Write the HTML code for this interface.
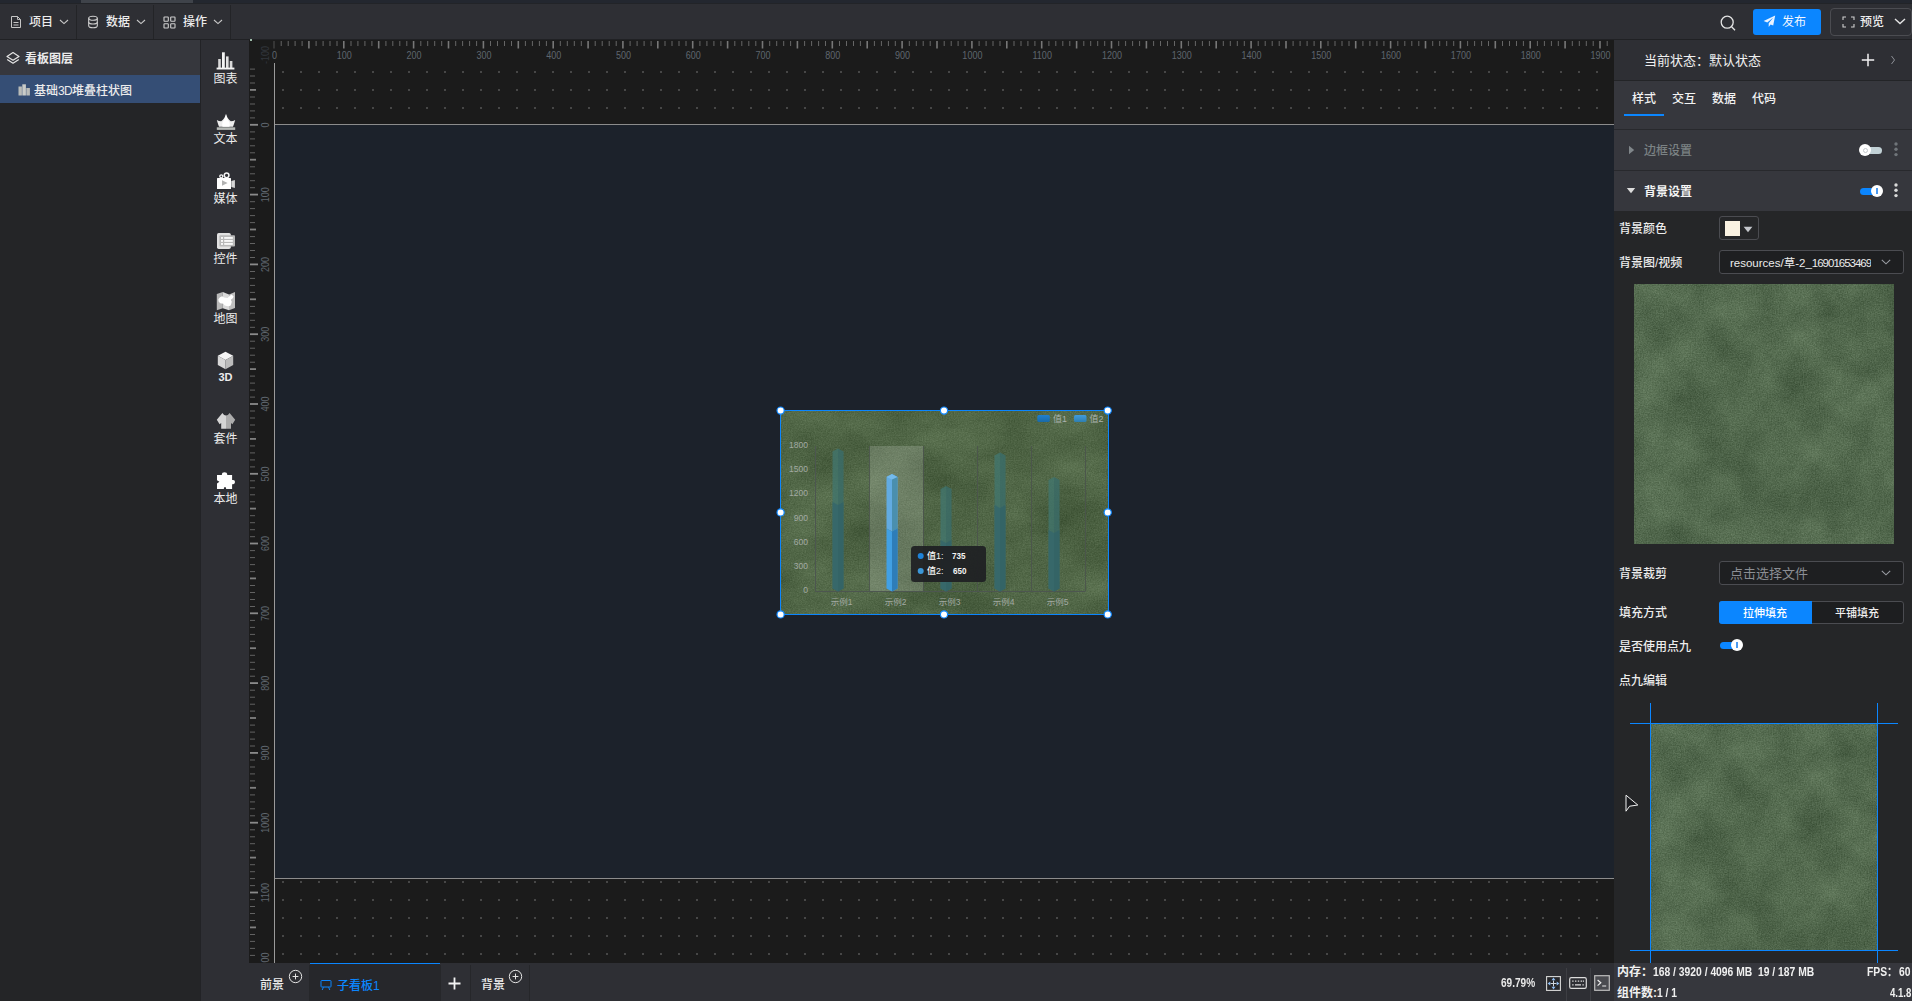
<!DOCTYPE html>
<html lang="zh-CN">
<head>
<meta charset="utf-8">
<title>看板编辑器</title>
<style>
*{box-sizing:border-box;margin:0;padding:0}
html,body{width:1912px;height:1001px;overflow:hidden;background:#242527}
body{position:relative;font-family:"Liberation Sans","Noto Sans CJK SC",sans-serif;font-size:12px;color:#ececec;line-height:1}
.abs{position:absolute}
.t{position:absolute;white-space:nowrap;line-height:16px;height:16px;margin-top:1px}
.b{font-weight:500}
svg{position:absolute;overflow:visible}
.num{font-family:"Liberation Sans",sans-serif;display:inline-block;transform-origin:0 50%}
/* top strip */
#strip{left:0;top:0;width:1912px;height:3px;background:#23272f}
#strip i{position:absolute;left:81px;top:0;width:112px;height:3px;background:#3f434a}
/* toolbar */
#bar{left:0;top:3px;width:1912px;height:37px;background:#2e2f34;border-bottom:1px solid #202124;border-top:1px solid #222428}
.sep{position:absolute;top:5px;width:1px;height:34px;background:#232427}
/* left */
#lhead{left:0;top:40px;width:200px;height:35px;background:#36373d}
#lsel{left:0;top:75px;width:200px;height:28px;background:#354e75}
#lrest{left:0;top:103px;width:200px;height:898px;background:#242527}
#lborder{left:200px;top:40px;width:1px;height:961px;background:#222326}
#icol{left:201px;top:40px;width:48px;height:961px;background:#2e2f34}
.ic{position:absolute;left:201px;width:49px;text-align:center;line-height:16px;height:16px;margin-top:1px}
/* canvas zone */
#zone{left:249px;top:40px;width:1365px;height:923px;background-color:#1b1b1b}
#dots{left:275px;top:63px;width:1339px;height:900px;background-image:radial-gradient(circle,#484848 0,#484848 0.700px,rgba(72,72,72,0) 1.250px);background-size:18px 18px;background-position:-1px 0px}
#stage{left:275px;top:125px;width:1339px;height:753px;background:#1c222b}
#vline{left:274px;top:63px;width:1.4px;height:900px;background:#9a9a9a}
#hl1{left:275px;top:123.6px;width:1339px;height:1.6px;background:#8c8c8c}
#hl2{left:275px;top:877.6px;width:1339px;height:1.6px;background:#8c8c8c}
#hr text,#vr text{font-family:"Liberation Sans",sans-serif;font-size:10.500px;fill:#5f666e}
/* bottom */
#bbar{left:249px;top:963px;width:1365px;height:38px;background:#2e2f34}
/* right */
#rp{left:1614px;top:40px;width:298px;height:961px;background:#252628}
#rhead{left:1614px;top:40px;width:298px;height:40px;background:#2e2f34}
#rtabs{left:1614px;top:81px;width:298px;height:48px;background:#36373d}
#rs1{left:1614px;top:130px;width:298px;height:40px;background:#36373d}
#rs2{left:1614px;top:171px;width:298px;height:40px;background:#36373d}
#rstat{left:1614px;top:963px;width:298px;height:38px;background:#36373d}
.box{position:absolute;border:1px solid #4b4c51;border-radius:3px;background:#1e1f21}
.tex{position:absolute;background:#506a4e;overflow:hidden}
</style>
</head>
<body>
<svg width="0" height="0" style="left:-10px;top:-10px">
  <defs>
    <filter id="grass" x="0" y="0" width="100%" height="100%" color-interpolation-filters="sRGB">
      <feTurbulence type="fractalNoise" baseFrequency="0.021" numOctaves="6" seed="7" result="a"/>
      <feColorMatrix in="a" type="matrix" values="0.17 0 0 0 0.238  0.18 0 0 0 0.320  0.16 0 0 0 0.224  0 0 0 0 1" result="a2"/>
      <feTurbulence type="fractalNoise" baseFrequency="0.75" numOctaves="2" seed="3" result="b"/>
      <feColorMatrix in="b" type="matrix" values="0 0.18 0 0 0  0 0.18 0 0 0  0 0.18 0 0 0  0 0 0 0 1" result="b2"/>
      <feComposite in="a2" in2="b2" operator="arithmetic" k1="0" k2="1" k3="1" k4="-0.090"/>
    </filter>
    <filter id="grass2" x="0" y="0" width="100%" height="100%" color-interpolation-filters="sRGB">
      <feTurbulence type="fractalNoise" baseFrequency="0.012 0.020" numOctaves="4" seed="7" result="a"/>
      <feColorMatrix in="a" type="matrix" values="0.17 0 0 0 0.222  0.18 0 0 0 0.302  0.16 0 0 0 0.188  0 0 0 0 1" result="a2"/>
      <feTurbulence type="fractalNoise" baseFrequency="0.75" numOctaves="2" seed="3" result="b"/>
      <feColorMatrix in="b" type="matrix" values="0 0.14 0 0 0  0 0.14 0 0 0  0 0.14 0 0 0  0 0 0 0 1" result="b2"/>
      <feComposite in="a2" in2="b2" operator="arithmetic" k1="0" k2="1" k3="1" k4="-0.070"/>
    </filter>
  </defs>
</svg>

<!-- ============ TOP ============ -->
<div id="strip" class="abs"><i></i></div>
<div id="bar" class="abs"></div>
<div class="sep" style="left:76px"></div>
<div class="sep" style="left:153px"></div>
<div class="sep" style="left:230px"></div>

<!-- menu: 项目 -->
<svg style="left:10px;top:15px" width="13" height="14" viewBox="0 0 13 14" fill="none" stroke="#c6c6c6" stroke-width="1">
  <path d="M1.5 1.5h6l3 3v8h-9z"/><path d="M7.5 1.5v3h3" stroke-width="0.9"/><path d="M3.5 7.5h5M3.5 10h5" stroke-width="1"/>
</svg>
<div class="t b" style="left:29px;top:13px">项目</div>
<svg style="left:59px;top:19px" width="10" height="6" viewBox="0 0 10 6" fill="none" stroke="#c8c8c8" stroke-width="1.1"><path d="M1 1l4 3.6L9 1"/></svg>
<!-- menu: 数据 -->
<svg style="left:87px;top:15px" width="12" height="14" viewBox="0 0 12 14" fill="none" stroke="#cfcfcf" stroke-width="1.1">
  <ellipse cx="6" cy="3.3" rx="4.3" ry="2"/><path d="M1.7 3.3v7.4c0 1.1 1.9 2 4.3 2s4.3-.9 4.3-2V3.3"/><path d="M1.7 7c0 1.1 1.9 2 4.3 2s4.3-.9 4.3-2"/>
</svg>
<div class="t b" style="left:106px;top:13px">数据</div>
<svg style="left:136px;top:19px" width="10" height="6" viewBox="0 0 10 6" fill="none" stroke="#c8c8c8" stroke-width="1.1"><path d="M1 1l4 3.6L9 1"/></svg>
<!-- menu: 操作 -->
<svg style="left:163px;top:16px" width="13" height="13" viewBox="0 0 13 13" fill="none" stroke="#cfcfcf" stroke-width="1.1">
  <rect x="1" y="1" width="4.3" height="4.3" rx=".6"/><rect x="7.7" y="1" width="4.3" height="4.3" rx=".6"/><rect x="1" y="7.7" width="4.3" height="4.3" rx=".6"/><rect x="7.7" y="7.7" width="4.3" height="4.3" rx=".6"/>
</svg>
<div class="t b" style="left:183px;top:13px">操作</div>
<svg style="left:213px;top:19px" width="10" height="6" viewBox="0 0 10 6" fill="none" stroke="#c8c8c8" stroke-width="1.1"><path d="M1 1l4 3.6L9 1"/></svg>

<!-- search / publish / preview -->
<svg style="left:1719px;top:14px" width="18" height="18" viewBox="0 0 18 18" fill="none" stroke="#e4e4e4" stroke-width="1.3"><circle cx="8.2" cy="8.2" r="6"/><path d="M12.6 12.8l3.4 3.4"/></svg>
<div class="abs" style="left:1753px;top:9px;width:68px;height:26px;background:#0b86ff;border-radius:3px"></div>
<svg style="left:1763px;top:15px" width="13" height="13" viewBox="0 0 13 13"><path d="M12.2 0.6L0.6 6.1l3.7 1.5 6-5-4.6 5.7v3.6l1.9-2.5 2.6 1.1z" fill="#e8f2ff"/></svg>
<div class="t" style="left:1782px;top:13px;color:#f2f7ff">发布</div>
<div class="abs" style="left:1830px;top:8px;width:82px;height:28px;border:1px solid #4b4c51;border-radius:4px"></div>
<svg style="left:1842px;top:16px" width="13" height="12" viewBox="0 0 13 12" fill="none" stroke="#d0d0d0" stroke-width="1.100"><path d="M1 4V1h3M9 1h3v3M12 8v3H9M4 11H1V8"/></svg>
<div class="t b" style="left:1860px;top:13px">预览</div>
<svg style="left:1894px;top:18px" width="12" height="7" viewBox="0 0 12 7" fill="none" stroke="#e4e4e4" stroke-width="1.4"><path d="M1 1l5 4.6L11 1"/></svg>

<!-- ============ LEFT PANEL ============ -->
<div id="lhead" class="abs"></div>
<div id="lsel" class="abs"></div>
<div id="lrest" class="abs"></div>
<div id="lborder" class="abs"></div>
<svg style="left:6px;top:51px" width="14" height="14" viewBox="0 0 14 14" fill="none" stroke="#e6e6e6" stroke-width="1.2" stroke-linejoin="round"><path d="M7 1.6L1 5.4l6 3.8 6-3.8z"/><path d="M1.2 8.4L7 12.2l5.8-3.8"/></svg>
<div class="t" style="left:25px;top:50px;font-weight:700">看板图层</div>
<svg style="left:18px;top:84px" width="13" height="12" viewBox="0 0 13 12"><rect x="0.5" y="2.5" width="3.4" height="9" fill="#b9bbb8"/><rect x="4.3" y="0.3" width="3.6" height="11.2" fill="#c9cbc8"/><rect x="8.3" y="4" width="3.6" height="7.5" fill="#b9bbb8"/></svg>
<div class="t" style="left:34px;top:82px;font-weight:500">基础<span style="letter-spacing:-.7px">3D</span>堆叠柱状图</div>

<!-- ============ ICON COLUMN ============ -->
<div id="icol" class="abs"></div>
<!-- 图表 -->
<svg style="left:216px;top:52px" width="19" height="18" viewBox="0 0 19 18"><rect x="2.2" y="7" width="2.6" height="9" fill="#d9d9d9"/><rect x="6" y="0.3" width="2.8" height="15.7" fill="#f4f4f4"/><rect x="10" y="4.4" width="2.6" height="11.6" fill="#e2e2e2"/><rect x="13.8" y="9" width="2.6" height="7" fill="#d9d9d9"/><rect x="0.6" y="15.6" width="17.8" height="1.9" fill="#f4f4f4"/></svg>
<div class="ic" style="top:70px">图表</div>
<!-- 文本 -->
<svg style="left:216px;top:113px" width="20" height="18" viewBox="0 0 20 18"><path d="M10 0.800Q11 5.500 14.800 8.300Q17.200 8.300 19.200 6.900Q18 11 17 13.800H3Q2 11 0.800 6.900Q2.800 8.300 5.200 8.300Q9 5.500 10 0.800z" fill="#ededed"/><path d="M10 1.500Q11 6.500 13.600 9.500Q14 12 13.500 13.800H6.500Q6 12 6.400 9.500Q9 6.500 10 1.500z" fill="#ffffff"/><rect x="0.800" y="14.300" width="18.400" height="2.600" fill="#b7bab7"/></svg>
<div class="ic" style="top:130px">文本</div>
<!-- 媒体 -->
<svg style="left:216px;top:171px" width="20" height="19" viewBox="0 0 20 19"><circle cx="10.600" cy="4.300" r="2.350" fill="none" stroke="#f6f6f6" stroke-width="1.500"/><circle cx="5.300" cy="5.300" r="1.500" fill="none" stroke="#f6f6f6" stroke-width="1.300"/><rect x="1" y="6.900" width="14" height="11.100" rx=".5" fill="#ffffff"/><path d="M15.300 10L18.900 9V17L15.300 16z" fill="#d6d6d6"/><path d="M6 9.300V14.700L11.600 12z" fill="#b2b2b2"/></svg>
<div class="ic" style="top:190px">媒体</div>
<!-- 控件 -->
<svg style="left:216px;top:232px" width="20" height="18" viewBox="0 0 20 18"><rect x="1" y="0.900" width="13.800" height="16.100" rx="1.700" fill="#e2e2e2"/><rect x="3.400" y="3.300" width="15.600" height="11.300" rx="1" fill="#b9b9b9"/><g fill="#ffffff"><rect x="5" y="5.100" width="2" height="1.700"/><rect x="8.200" y="5.100" width="8.600" height="1.700"/><rect x="5" y="8.100" width="2" height="1.700"/><rect x="8.200" y="8.100" width="8.600" height="1.700"/><rect x="5" y="11.100" width="2" height="1.700"/><rect x="8.200" y="11.100" width="8.600" height="1.700"/></g></svg>
<div class="ic" style="top:250px">控件</div>
<!-- 地图 -->
<svg style="left:216px;top:291px" width="20" height="20" viewBox="0 0 20 20"><path d="M0.800 3L6.800 1V17.200L0.800 19.200z" fill="#b9b9b9"/><path d="M6.800 1L13 3.500V19.200L6.800 17.200z" fill="#dadada"/><path d="M13 3.500L19 1V17L13 19.200z" fill="#bebebe"/><path d="M2.300 8.200L4 6.300L6.200 5.200L8 6.600L11.600 7L13.600 5L15.600 3.600L17.600 5.400L16.800 7.200L14.800 8.800L15.800 10.800L15.200 13L14.400 14.800L12 15.200L8.600 14.600L7.400 12.800L4.200 12.200L2.600 10.600z" fill="#ffffff"/></svg>
<div class="ic" style="top:310px">地图</div>
<!-- 3D -->
<svg style="left:217px;top:351px" width="17" height="19" viewBox="0 0 17 19"><path d="M8.5 0.8l7.7 4-7.7 4.2L0.8 4.8z" fill="#f6f6f6"/><path d="M0.8 4.8l7.7 4.2v9.2l-7.7-4.3z" fill="#d8d8d8"/><path d="M16.2 4.8L8.5 9v9.2l7.7-4.3z" fill="#bcbcbc"/></svg>
<div class="ic" style="top:368px;font-family:'Liberation Sans',sans-serif;font-weight:700;font-size:11px">3D</div>
<!-- 套件 -->
<svg style="left:216px;top:412px" width="20" height="18" viewBox="0 0 20 18"><path d="M6.400 1Q8 3.600 10 3.600V16.800H5.200V11L3.600 12.200L0.800 7.700z" fill="#d5d5d5"/><path d="M10 3.600Q12 3.600 13.600 1L19.200 7.700L16.400 12.200L15 11V16.800H10z" fill="#acacac"/></svg>
<div class="ic" style="top:430px">套件</div>
<!-- 本地 -->
<svg style="left:216px;top:471px" width="20" height="19" viewBox="0 0 20 19"><path d="M1 3.900H5.900V3Q5.900 1.200 8.500 1.200Q11.200 1.200 11.200 3V3.900H16.100V9H17.200Q19 9 19 11.100Q19 13.200 17.200 13.200H16.100V18H10.200Q10.200 15.900 9 15.900Q7.800 15.900 7.800 18H1V12.400L3.400 10.800L1 9.300z" fill="#ffffff"/></svg>
<div class="ic" style="top:490px">本地</div>

<!-- ============ CANVAS ZONE ============ -->
<div id="zone" class="abs"></div>
<div id="dots" class="abs"></div>
<div id="stage" class="abs"></div>
<div id="vline" class="abs"></div>
<div id="hl1" class="abs"></div>
<div id="hl2" class="abs"></div>
<div class="abs" style="left:250px;top:39px;width:2px;height:2px;background:#9dbca9"></div>
<svg id="hr" style="left:0;top:40px" width="1614" height="24" viewBox="0 0 1614 24">
<rect x="273.2" y="1" width="1.6" height="7.5" fill="#3c3c3c"/>
<rect x="280.7" y="1" width="1" height="5" fill="#666"/>
<rect x="287.7" y="1" width="1" height="5" fill="#666"/>
<rect x="294.6" y="1" width="1" height="5" fill="#666"/>
<rect x="301.6" y="1" width="1" height="5" fill="#666"/>
<rect x="308.1" y="1" width="1.6" height="7.5" fill="#777"/>
<rect x="315.6" y="1" width="1" height="5" fill="#666"/>
<rect x="322.6" y="1" width="1" height="5" fill="#666"/>
<rect x="329.5" y="1" width="1" height="5" fill="#666"/>
<rect x="336.5" y="1" width="1" height="5" fill="#666"/>
<rect x="343.0" y="1" width="1.6" height="7.5" fill="#777"/>
<rect x="350.5" y="1" width="1" height="5" fill="#666"/>
<rect x="357.4" y="1" width="1" height="5" fill="#666"/>
<rect x="364.4" y="1" width="1" height="5" fill="#666"/>
<rect x="371.4" y="1" width="1" height="5" fill="#666"/>
<rect x="377.9" y="1" width="1.6" height="7.5" fill="#777"/>
<rect x="385.4" y="1" width="1" height="5" fill="#666"/>
<rect x="392.3" y="1" width="1" height="5" fill="#666"/>
<rect x="399.3" y="1" width="1" height="5" fill="#666"/>
<rect x="406.3" y="1" width="1" height="5" fill="#666"/>
<rect x="412.8" y="1" width="1.6" height="7.5" fill="#777"/>
<rect x="420.3" y="1" width="1" height="5" fill="#666"/>
<rect x="427.2" y="1" width="1" height="5" fill="#666"/>
<rect x="434.2" y="1" width="1" height="5" fill="#666"/>
<rect x="441.2" y="1" width="1" height="5" fill="#666"/>
<rect x="447.7" y="1" width="1.6" height="7.5" fill="#777"/>
<rect x="455.2" y="1" width="1" height="5" fill="#666"/>
<rect x="462.1" y="1" width="1" height="5" fill="#666"/>
<rect x="469.1" y="1" width="1" height="5" fill="#666"/>
<rect x="476.1" y="1" width="1" height="5" fill="#666"/>
<rect x="482.6" y="1" width="1.6" height="7.5" fill="#777"/>
<rect x="490.0" y="1" width="1" height="5" fill="#666"/>
<rect x="497.0" y="1" width="1" height="5" fill="#666"/>
<rect x="504.0" y="1" width="1" height="5" fill="#666"/>
<rect x="511.0" y="1" width="1" height="5" fill="#666"/>
<rect x="517.5" y="1" width="1.6" height="7.5" fill="#777"/>
<rect x="524.9" y="1" width="1" height="5" fill="#666"/>
<rect x="531.9" y="1" width="1" height="5" fill="#666"/>
<rect x="538.9" y="1" width="1" height="5" fill="#666"/>
<rect x="545.9" y="1" width="1" height="5" fill="#666"/>
<rect x="552.4" y="1" width="1.6" height="7.5" fill="#777"/>
<rect x="559.8" y="1" width="1" height="5" fill="#666"/>
<rect x="566.8" y="1" width="1" height="5" fill="#666"/>
<rect x="573.8" y="1" width="1" height="5" fill="#666"/>
<rect x="580.8" y="1" width="1" height="5" fill="#666"/>
<rect x="587.3" y="1" width="1.6" height="7.5" fill="#777"/>
<rect x="594.7" y="1" width="1" height="5" fill="#666"/>
<rect x="601.7" y="1" width="1" height="5" fill="#666"/>
<rect x="608.7" y="1" width="1" height="5" fill="#666"/>
<rect x="615.7" y="1" width="1" height="5" fill="#666"/>
<rect x="622.1" y="1" width="1.6" height="7.5" fill="#777"/>
<rect x="629.6" y="1" width="1" height="5" fill="#666"/>
<rect x="636.6" y="1" width="1" height="5" fill="#666"/>
<rect x="643.6" y="1" width="1" height="5" fill="#666"/>
<rect x="650.6" y="1" width="1" height="5" fill="#666"/>
<rect x="657.0" y="1" width="1.6" height="7.5" fill="#777"/>
<rect x="664.5" y="1" width="1" height="5" fill="#666"/>
<rect x="671.5" y="1" width="1" height="5" fill="#666"/>
<rect x="678.5" y="1" width="1" height="5" fill="#666"/>
<rect x="685.5" y="1" width="1" height="5" fill="#666"/>
<rect x="691.9" y="1" width="1.6" height="7.5" fill="#777"/>
<rect x="699.4" y="1" width="1" height="5" fill="#666"/>
<rect x="706.4" y="1" width="1" height="5" fill="#666"/>
<rect x="713.4" y="1" width="1" height="5" fill="#666"/>
<rect x="720.4" y="1" width="1" height="5" fill="#666"/>
<rect x="726.8" y="1" width="1.6" height="7.5" fill="#777"/>
<rect x="734.3" y="1" width="1" height="5" fill="#666"/>
<rect x="741.3" y="1" width="1" height="5" fill="#666"/>
<rect x="748.3" y="1" width="1" height="5" fill="#666"/>
<rect x="755.3" y="1" width="1" height="5" fill="#666"/>
<rect x="761.7" y="1" width="1.6" height="7.5" fill="#777"/>
<rect x="769.2" y="1" width="1" height="5" fill="#666"/>
<rect x="776.2" y="1" width="1" height="5" fill="#666"/>
<rect x="783.2" y="1" width="1" height="5" fill="#666"/>
<rect x="790.1" y="1" width="1" height="5" fill="#666"/>
<rect x="796.6" y="1" width="1.6" height="7.5" fill="#777"/>
<rect x="804.1" y="1" width="1" height="5" fill="#666"/>
<rect x="811.1" y="1" width="1" height="5" fill="#666"/>
<rect x="818.1" y="1" width="1" height="5" fill="#666"/>
<rect x="825.0" y="1" width="1" height="5" fill="#666"/>
<rect x="831.5" y="1" width="1.6" height="7.5" fill="#777"/>
<rect x="839.0" y="1" width="1" height="5" fill="#666"/>
<rect x="846.0" y="1" width="1" height="5" fill="#666"/>
<rect x="853.0" y="1" width="1" height="5" fill="#666"/>
<rect x="859.9" y="1" width="1" height="5" fill="#666"/>
<rect x="866.4" y="1" width="1.6" height="7.5" fill="#777"/>
<rect x="873.9" y="1" width="1" height="5" fill="#666"/>
<rect x="880.9" y="1" width="1" height="5" fill="#666"/>
<rect x="887.9" y="1" width="1" height="5" fill="#666"/>
<rect x="894.8" y="1" width="1" height="5" fill="#666"/>
<rect x="901.3" y="1" width="1.6" height="7.5" fill="#777"/>
<rect x="908.8" y="1" width="1" height="5" fill="#666"/>
<rect x="915.8" y="1" width="1" height="5" fill="#666"/>
<rect x="922.7" y="1" width="1" height="5" fill="#666"/>
<rect x="929.7" y="1" width="1" height="5" fill="#666"/>
<rect x="936.2" y="1" width="1.6" height="7.5" fill="#777"/>
<rect x="943.7" y="1" width="1" height="5" fill="#666"/>
<rect x="950.7" y="1" width="1" height="5" fill="#666"/>
<rect x="957.6" y="1" width="1" height="5" fill="#666"/>
<rect x="964.6" y="1" width="1" height="5" fill="#666"/>
<rect x="971.1" y="1" width="1.6" height="7.5" fill="#777"/>
<rect x="978.6" y="1" width="1" height="5" fill="#666"/>
<rect x="985.6" y="1" width="1" height="5" fill="#666"/>
<rect x="992.5" y="1" width="1" height="5" fill="#666"/>
<rect x="999.5" y="1" width="1" height="5" fill="#666"/>
<rect x="1006.0" y="1" width="1.6" height="7.5" fill="#777"/>
<rect x="1013.5" y="1" width="1" height="5" fill="#666"/>
<rect x="1020.5" y="1" width="1" height="5" fill="#666"/>
<rect x="1027.4" y="1" width="1" height="5" fill="#666"/>
<rect x="1034.4" y="1" width="1" height="5" fill="#666"/>
<rect x="1040.9" y="1" width="1.6" height="7.5" fill="#777"/>
<rect x="1048.4" y="1" width="1" height="5" fill="#666"/>
<rect x="1055.3" y="1" width="1" height="5" fill="#666"/>
<rect x="1062.3" y="1" width="1" height="5" fill="#666"/>
<rect x="1069.3" y="1" width="1" height="5" fill="#666"/>
<rect x="1075.8" y="1" width="1.6" height="7.5" fill="#777"/>
<rect x="1083.3" y="1" width="1" height="5" fill="#666"/>
<rect x="1090.2" y="1" width="1" height="5" fill="#666"/>
<rect x="1097.2" y="1" width="1" height="5" fill="#666"/>
<rect x="1104.2" y="1" width="1" height="5" fill="#666"/>
<rect x="1110.7" y="1" width="1.6" height="7.5" fill="#777"/>
<rect x="1118.2" y="1" width="1" height="5" fill="#666"/>
<rect x="1125.1" y="1" width="1" height="5" fill="#666"/>
<rect x="1132.1" y="1" width="1" height="5" fill="#666"/>
<rect x="1139.1" y="1" width="1" height="5" fill="#666"/>
<rect x="1145.6" y="1" width="1.6" height="7.5" fill="#777"/>
<rect x="1153.1" y="1" width="1" height="5" fill="#666"/>
<rect x="1160.0" y="1" width="1" height="5" fill="#666"/>
<rect x="1167.0" y="1" width="1" height="5" fill="#666"/>
<rect x="1174.0" y="1" width="1" height="5" fill="#666"/>
<rect x="1180.5" y="1" width="1.6" height="7.5" fill="#777"/>
<rect x="1187.9" y="1" width="1" height="5" fill="#666"/>
<rect x="1194.9" y="1" width="1" height="5" fill="#666"/>
<rect x="1201.9" y="1" width="1" height="5" fill="#666"/>
<rect x="1208.9" y="1" width="1" height="5" fill="#666"/>
<rect x="1215.4" y="1" width="1.6" height="7.5" fill="#777"/>
<rect x="1222.8" y="1" width="1" height="5" fill="#666"/>
<rect x="1229.8" y="1" width="1" height="5" fill="#666"/>
<rect x="1236.8" y="1" width="1" height="5" fill="#666"/>
<rect x="1243.8" y="1" width="1" height="5" fill="#666"/>
<rect x="1250.3" y="1" width="1.6" height="7.5" fill="#777"/>
<rect x="1257.7" y="1" width="1" height="5" fill="#666"/>
<rect x="1264.7" y="1" width="1" height="5" fill="#666"/>
<rect x="1271.7" y="1" width="1" height="5" fill="#666"/>
<rect x="1278.7" y="1" width="1" height="5" fill="#666"/>
<rect x="1285.2" y="1" width="1.6" height="7.5" fill="#777"/>
<rect x="1292.6" y="1" width="1" height="5" fill="#666"/>
<rect x="1299.6" y="1" width="1" height="5" fill="#666"/>
<rect x="1306.6" y="1" width="1" height="5" fill="#666"/>
<rect x="1313.6" y="1" width="1" height="5" fill="#666"/>
<rect x="1320.0" y="1" width="1.6" height="7.5" fill="#777"/>
<rect x="1327.5" y="1" width="1" height="5" fill="#666"/>
<rect x="1334.5" y="1" width="1" height="5" fill="#666"/>
<rect x="1341.5" y="1" width="1" height="5" fill="#666"/>
<rect x="1348.5" y="1" width="1" height="5" fill="#666"/>
<rect x="1354.9" y="1" width="1.6" height="7.5" fill="#777"/>
<rect x="1362.4" y="1" width="1" height="5" fill="#666"/>
<rect x="1369.4" y="1" width="1" height="5" fill="#666"/>
<rect x="1376.4" y="1" width="1" height="5" fill="#666"/>
<rect x="1383.4" y="1" width="1" height="5" fill="#666"/>
<rect x="1389.8" y="1" width="1.6" height="7.5" fill="#777"/>
<rect x="1397.3" y="1" width="1" height="5" fill="#666"/>
<rect x="1404.3" y="1" width="1" height="5" fill="#666"/>
<rect x="1411.3" y="1" width="1" height="5" fill="#666"/>
<rect x="1418.3" y="1" width="1" height="5" fill="#666"/>
<rect x="1424.7" y="1" width="1.6" height="7.5" fill="#777"/>
<rect x="1432.2" y="1" width="1" height="5" fill="#666"/>
<rect x="1439.2" y="1" width="1" height="5" fill="#666"/>
<rect x="1446.2" y="1" width="1" height="5" fill="#666"/>
<rect x="1453.2" y="1" width="1" height="5" fill="#666"/>
<rect x="1459.6" y="1" width="1.6" height="7.5" fill="#777"/>
<rect x="1467.1" y="1" width="1" height="5" fill="#666"/>
<rect x="1474.1" y="1" width="1" height="5" fill="#666"/>
<rect x="1481.1" y="1" width="1" height="5" fill="#666"/>
<rect x="1488.0" y="1" width="1" height="5" fill="#666"/>
<rect x="1494.5" y="1" width="1.6" height="7.5" fill="#777"/>
<rect x="1502.0" y="1" width="1" height="5" fill="#666"/>
<rect x="1509.0" y="1" width="1" height="5" fill="#666"/>
<rect x="1516.0" y="1" width="1" height="5" fill="#666"/>
<rect x="1522.9" y="1" width="1" height="5" fill="#666"/>
<rect x="1529.4" y="1" width="1.6" height="7.5" fill="#777"/>
<rect x="1536.9" y="1" width="1" height="5" fill="#666"/>
<rect x="1543.9" y="1" width="1" height="5" fill="#666"/>
<rect x="1550.9" y="1" width="1" height="5" fill="#666"/>
<rect x="1557.8" y="1" width="1" height="5" fill="#666"/>
<rect x="1564.3" y="1" width="1.6" height="7.5" fill="#777"/>
<rect x="1571.8" y="1" width="1" height="5" fill="#666"/>
<rect x="1578.8" y="1" width="1" height="5" fill="#666"/>
<rect x="1585.8" y="1" width="1" height="5" fill="#666"/>
<rect x="1592.7" y="1" width="1" height="5" fill="#666"/>
<rect x="1599.2" y="1" width="1.6" height="7.5" fill="#777"/>
<rect x="1606.7" y="1" width="1" height="5" fill="#666"/>
<text transform="translate(274.5,18.700) scale(.86,1)" text-anchor="middle">0</text>
<text transform="translate(344.3,18.700) scale(.86,1)" text-anchor="middle">100</text>
<text transform="translate(414.1,18.700) scale(.86,1)" text-anchor="middle">200</text>
<text transform="translate(483.9,18.700) scale(.86,1)" text-anchor="middle">300</text>
<text transform="translate(553.7,18.700) scale(.86,1)" text-anchor="middle">400</text>
<text transform="translate(623.4,18.700) scale(.86,1)" text-anchor="middle">500</text>
<text transform="translate(693.2,18.700) scale(.86,1)" text-anchor="middle">600</text>
<text transform="translate(763.0,18.700) scale(.86,1)" text-anchor="middle">700</text>
<text transform="translate(832.8,18.700) scale(.86,1)" text-anchor="middle">800</text>
<text transform="translate(902.6,18.700) scale(.86,1)" text-anchor="middle">900</text>
<text transform="translate(972.4,18.700) scale(.86,1)" text-anchor="middle">1000</text>
<text transform="translate(1042.2,18.700) scale(.86,1)" text-anchor="middle">1100</text>
<text transform="translate(1112.0,18.700) scale(.86,1)" text-anchor="middle">1200</text>
<text transform="translate(1181.8,18.700) scale(.86,1)" text-anchor="middle">1300</text>
<text transform="translate(1251.6,18.700) scale(.86,1)" text-anchor="middle">1400</text>
<text transform="translate(1321.3,18.700) scale(.86,1)" text-anchor="middle">1500</text>
<text transform="translate(1391.1,18.700) scale(.86,1)" text-anchor="middle">1600</text>
<text transform="translate(1460.9,18.700) scale(.86,1)" text-anchor="middle">1700</text>
<text transform="translate(1530.7,18.700) scale(.86,1)" text-anchor="middle">1800</text>
<text transform="translate(1600.5,18.700) scale(.86,1)" text-anchor="middle">1900</text>
</svg>
<svg id="vr" style="left:250px;top:40px" width="26" height="923" viewBox="0 0 26 923">
<rect x="0" y="28.6" width="5" height="1" fill="#626262"/>
<rect x="0" y="35.5" width="5" height="1" fill="#626262"/>
<rect x="0" y="42.5" width="5" height="1" fill="#626262"/>
<rect x="0" y="49.0" width="6" height="1.8" fill="#808080"/>
<rect x="0" y="56.5" width="5" height="1" fill="#626262"/>
<rect x="0" y="63.5" width="5" height="1" fill="#626262"/>
<rect x="0" y="70.4" width="5" height="1" fill="#626262"/>
<rect x="0" y="77.4" width="5" height="1" fill="#626262"/>
<rect x="0" y="83.9" width="8" height="1.8" fill="#8a8a8a"/>
<rect x="0" y="91.4" width="5" height="1" fill="#626262"/>
<rect x="0" y="98.4" width="5" height="1" fill="#626262"/>
<rect x="0" y="105.3" width="5" height="1" fill="#626262"/>
<rect x="0" y="112.3" width="5" height="1" fill="#626262"/>
<rect x="0" y="118.8" width="6" height="1.8" fill="#808080"/>
<rect x="0" y="126.3" width="5" height="1" fill="#626262"/>
<rect x="0" y="133.3" width="5" height="1" fill="#626262"/>
<rect x="0" y="140.2" width="5" height="1" fill="#626262"/>
<rect x="0" y="147.2" width="5" height="1" fill="#626262"/>
<rect x="0" y="153.7" width="8" height="1.8" fill="#8a8a8a"/>
<rect x="0" y="161.2" width="5" height="1" fill="#626262"/>
<rect x="0" y="168.1" width="5" height="1" fill="#626262"/>
<rect x="0" y="175.1" width="5" height="1" fill="#626262"/>
<rect x="0" y="182.1" width="5" height="1" fill="#626262"/>
<rect x="0" y="188.6" width="6" height="1.8" fill="#808080"/>
<rect x="0" y="196.1" width="5" height="1" fill="#626262"/>
<rect x="0" y="203.0" width="5" height="1" fill="#626262"/>
<rect x="0" y="210.0" width="5" height="1" fill="#626262"/>
<rect x="0" y="217.0" width="5" height="1" fill="#626262"/>
<rect x="0" y="223.5" width="8" height="1.8" fill="#8a8a8a"/>
<rect x="0" y="231.0" width="5" height="1" fill="#626262"/>
<rect x="0" y="237.9" width="5" height="1" fill="#626262"/>
<rect x="0" y="244.9" width="5" height="1" fill="#626262"/>
<rect x="0" y="251.9" width="5" height="1" fill="#626262"/>
<rect x="0" y="258.4" width="6" height="1.8" fill="#808080"/>
<rect x="0" y="265.9" width="5" height="1" fill="#626262"/>
<rect x="0" y="272.8" width="5" height="1" fill="#626262"/>
<rect x="0" y="279.8" width="5" height="1" fill="#626262"/>
<rect x="0" y="286.8" width="5" height="1" fill="#626262"/>
<rect x="0" y="293.3" width="8" height="1.8" fill="#8a8a8a"/>
<rect x="0" y="300.7" width="5" height="1" fill="#626262"/>
<rect x="0" y="307.7" width="5" height="1" fill="#626262"/>
<rect x="0" y="314.7" width="5" height="1" fill="#626262"/>
<rect x="0" y="321.7" width="5" height="1" fill="#626262"/>
<rect x="0" y="328.2" width="6" height="1.8" fill="#808080"/>
<rect x="0" y="335.6" width="5" height="1" fill="#626262"/>
<rect x="0" y="342.6" width="5" height="1" fill="#626262"/>
<rect x="0" y="349.6" width="5" height="1" fill="#626262"/>
<rect x="0" y="356.6" width="5" height="1" fill="#626262"/>
<rect x="0" y="363.1" width="8" height="1.8" fill="#8a8a8a"/>
<rect x="0" y="370.5" width="5" height="1" fill="#626262"/>
<rect x="0" y="377.5" width="5" height="1" fill="#626262"/>
<rect x="0" y="384.5" width="5" height="1" fill="#626262"/>
<rect x="0" y="391.5" width="5" height="1" fill="#626262"/>
<rect x="0" y="398.0" width="6" height="1.8" fill="#808080"/>
<rect x="0" y="405.4" width="5" height="1" fill="#626262"/>
<rect x="0" y="412.4" width="5" height="1" fill="#626262"/>
<rect x="0" y="419.4" width="5" height="1" fill="#626262"/>
<rect x="0" y="426.4" width="5" height="1" fill="#626262"/>
<rect x="0" y="432.9" width="8" height="1.8" fill="#8a8a8a"/>
<rect x="0" y="440.3" width="5" height="1" fill="#626262"/>
<rect x="0" y="447.3" width="5" height="1" fill="#626262"/>
<rect x="0" y="454.3" width="5" height="1" fill="#626262"/>
<rect x="0" y="461.3" width="5" height="1" fill="#626262"/>
<rect x="0" y="467.7" width="6" height="1.8" fill="#808080"/>
<rect x="0" y="475.2" width="5" height="1" fill="#626262"/>
<rect x="0" y="482.2" width="5" height="1" fill="#626262"/>
<rect x="0" y="489.2" width="5" height="1" fill="#626262"/>
<rect x="0" y="496.2" width="5" height="1" fill="#626262"/>
<rect x="0" y="502.6" width="8" height="1.8" fill="#8a8a8a"/>
<rect x="0" y="510.1" width="5" height="1" fill="#626262"/>
<rect x="0" y="517.1" width="5" height="1" fill="#626262"/>
<rect x="0" y="524.1" width="5" height="1" fill="#626262"/>
<rect x="0" y="531.1" width="5" height="1" fill="#626262"/>
<rect x="0" y="537.5" width="6" height="1.8" fill="#808080"/>
<rect x="0" y="545.0" width="5" height="1" fill="#626262"/>
<rect x="0" y="552.0" width="5" height="1" fill="#626262"/>
<rect x="0" y="559.0" width="5" height="1" fill="#626262"/>
<rect x="0" y="566.0" width="5" height="1" fill="#626262"/>
<rect x="0" y="572.4" width="8" height="1.8" fill="#8a8a8a"/>
<rect x="0" y="579.9" width="5" height="1" fill="#626262"/>
<rect x="0" y="586.9" width="5" height="1" fill="#626262"/>
<rect x="0" y="593.9" width="5" height="1" fill="#626262"/>
<rect x="0" y="600.8" width="5" height="1" fill="#626262"/>
<rect x="0" y="607.3" width="6" height="1.8" fill="#808080"/>
<rect x="0" y="614.8" width="5" height="1" fill="#626262"/>
<rect x="0" y="621.8" width="5" height="1" fill="#626262"/>
<rect x="0" y="628.8" width="5" height="1" fill="#626262"/>
<rect x="0" y="635.7" width="5" height="1" fill="#626262"/>
<rect x="0" y="642.2" width="8" height="1.8" fill="#8a8a8a"/>
<rect x="0" y="649.7" width="5" height="1" fill="#626262"/>
<rect x="0" y="656.7" width="5" height="1" fill="#626262"/>
<rect x="0" y="663.7" width="5" height="1" fill="#626262"/>
<rect x="0" y="670.6" width="5" height="1" fill="#626262"/>
<rect x="0" y="677.1" width="6" height="1.8" fill="#808080"/>
<rect x="0" y="684.6" width="5" height="1" fill="#626262"/>
<rect x="0" y="691.6" width="5" height="1" fill="#626262"/>
<rect x="0" y="698.6" width="5" height="1" fill="#626262"/>
<rect x="0" y="705.5" width="5" height="1" fill="#626262"/>
<rect x="0" y="712.0" width="8" height="1.8" fill="#8a8a8a"/>
<rect x="0" y="719.5" width="5" height="1" fill="#626262"/>
<rect x="0" y="726.5" width="5" height="1" fill="#626262"/>
<rect x="0" y="733.4" width="5" height="1" fill="#626262"/>
<rect x="0" y="740.4" width="5" height="1" fill="#626262"/>
<rect x="0" y="746.9" width="6" height="1.8" fill="#808080"/>
<rect x="0" y="754.4" width="5" height="1" fill="#626262"/>
<rect x="0" y="761.4" width="5" height="1" fill="#626262"/>
<rect x="0" y="768.3" width="5" height="1" fill="#626262"/>
<rect x="0" y="775.3" width="5" height="1" fill="#626262"/>
<rect x="0" y="781.8" width="8" height="1.8" fill="#8a8a8a"/>
<rect x="0" y="789.3" width="5" height="1" fill="#626262"/>
<rect x="0" y="796.3" width="5" height="1" fill="#626262"/>
<rect x="0" y="803.2" width="5" height="1" fill="#626262"/>
<rect x="0" y="810.2" width="5" height="1" fill="#626262"/>
<rect x="0" y="816.7" width="6" height="1.8" fill="#808080"/>
<rect x="0" y="824.2" width="5" height="1" fill="#626262"/>
<rect x="0" y="831.2" width="5" height="1" fill="#626262"/>
<rect x="0" y="838.1" width="5" height="1" fill="#626262"/>
<rect x="0" y="845.1" width="5" height="1" fill="#626262"/>
<rect x="0" y="851.6" width="8" height="1.8" fill="#8a8a8a"/>
<rect x="0" y="859.1" width="5" height="1" fill="#626262"/>
<rect x="0" y="866.0" width="5" height="1" fill="#626262"/>
<rect x="0" y="873.0" width="5" height="1" fill="#626262"/>
<rect x="0" y="880.0" width="5" height="1" fill="#626262"/>
<rect x="0" y="886.5" width="6" height="1.8" fill="#808080"/>
<rect x="0" y="894.0" width="5" height="1" fill="#626262"/>
<rect x="0" y="900.9" width="5" height="1" fill="#626262"/>
<rect x="0" y="907.9" width="5" height="1" fill="#626262"/>
<rect x="0" y="914.9" width="5" height="1" fill="#626262"/>
<text transform="translate(19.200,15) rotate(-90) scale(.86,1)" text-anchor="middle" style="fill:#32363b">-100</text>
<text transform="translate(19.200,84.9) rotate(-90) scale(.86,1)" text-anchor="middle">0</text>
<text transform="translate(19.200,154.7) rotate(-90) scale(.86,1)" text-anchor="middle">100</text>
<text transform="translate(19.200,224.5) rotate(-90) scale(.86,1)" text-anchor="middle">200</text>
<text transform="translate(19.200,294.3) rotate(-90) scale(.86,1)" text-anchor="middle">300</text>
<text transform="translate(19.200,364.1) rotate(-90) scale(.86,1)" text-anchor="middle">400</text>
<text transform="translate(19.200,433.9) rotate(-90) scale(.86,1)" text-anchor="middle">500</text>
<text transform="translate(19.200,503.6) rotate(-90) scale(.86,1)" text-anchor="middle">600</text>
<text transform="translate(19.200,573.4) rotate(-90) scale(.86,1)" text-anchor="middle">700</text>
<text transform="translate(19.200,643.2) rotate(-90) scale(.86,1)" text-anchor="middle">800</text>
<text transform="translate(19.200,713.0) rotate(-90) scale(.86,1)" text-anchor="middle">900</text>
<text transform="translate(19.200,782.8) rotate(-90) scale(.86,1)" text-anchor="middle">1000</text>
<text transform="translate(19.200,852.6) rotate(-90) scale(.86,1)" text-anchor="middle">1100</text>
<text transform="translate(19.200,922.4) rotate(-90) scale(.86,1)" text-anchor="middle">1200</text>
</svg>
<!-- ============ CHART WIDGET ============ -->
<div class="tex" style="left:781px;top:411px;width:327px;height:204px;background:#556a4a"><svg width="327" height="204" style="left:0;top:0"><rect width="327" height="204" filter="url(#grass2)"/></svg></div>
<svg id="chart" style="left:781px;top:411px" width="327" height="204" viewBox="0 0 327 204">
  <defs>
    <linearGradient id="lg1" x1="0" y1="0" x2="0" y2="1"><stop offset="0" stop-color="#1e7fd0"/><stop offset="1" stop-color="#1a6aa6"/></linearGradient>
    <linearGradient id="lg2" x1="0" y1="0" x2="0" y2="1"><stop offset="0" stop-color="#3f9bdc"/><stop offset="1" stop-color="#2f7fb0"/></linearGradient>
  </defs>
  <!-- legend -->
  <rect x="256.300" y="4" width="12.500" height="7" rx="1.500" fill="url(#lg1)"/>
  <text x="272" y="10.800" font-size="9" fill="#aab2ae">值1</text>
  <rect x="293" y="4" width="12.500" height="7" rx="1.500" fill="url(#lg2)"/>
  <text x="308.600" y="10.800" font-size="9" fill="#aab2ae">值2</text>
  <!-- y labels -->
  <g font-family="Liberation Sans, sans-serif" font-size="8.500" fill="#a3aaa3" text-anchor="end">
    <text x="27" y="37">1800</text><text x="27" y="61.200">1500</text><text x="27" y="85.400">1200</text><text x="27" y="109.600">900</text><text x="27" y="133.800">600</text><text x="27" y="158">300</text><text x="27" y="182.200">0</text>
  </g>
  <!-- highlight band -->
  <rect x="88" y="35" width="54" height="145" fill="#ffffff" fill-opacity=".17"/>
  <!-- axis + split lines -->
  <g stroke="#4d5650" stroke-width="1" fill="none">
    <path d="M34.500 35v145.500M34.500 180.500h270"/>
    <path d="M88.500 35v145M142.500 35v145M196.500 35v145M250.500 35v145M304.500 35v145" stroke="#4b544d" stroke-opacity=".9"/>
  </g>
  <!-- bars (dimmed) -->
  <g><path d="M51.5 40.5L57 37.5L62.5 40.5V177.5L57 180.5L51.5 177.5z" fill="#42756c" fill-opacity=".82"/><path d="M51.5 91L57 94L62.5 91V177.5L57 180.5L51.5 177.5z" fill="#35666b" fill-opacity=".85"/><path d="M57 37.5L62.5 40.5V177.5L57 180.5z" fill="#2d5a5e" fill-opacity=".28"/><path d="M159.5 78L165 75L170.5 78V177.5L165 180.5L159.5 177.5z" fill="#42756c" fill-opacity=".82"/><path d="M159.5 129L165 132L170.5 129V177.5L165 180.5L159.5 177.5z" fill="#35666b" fill-opacity=".85"/><path d="M165 75L170.5 78V177.5L165 180.5z" fill="#2d5a5e" fill-opacity=".28"/><path d="M213.5 44.5L219 41.5L224.5 44.5V177.5L219 180.5L213.5 177.5z" fill="#42756c" fill-opacity=".82"/><path d="M213.5 94L219 97L224.5 94V177.5L219 180.5L213.5 177.5z" fill="#35666b" fill-opacity=".85"/><path d="M219 41.5L224.5 44.5V177.5L219 180.5z" fill="#2d5a5e" fill-opacity=".28"/><path d="M267.5 69L273 66L278.5 69V177.5L273 180.5L267.5 177.5z" fill="#42756c" fill-opacity=".82"/><path d="M267.5 119L273 122L278.5 119V177.5L273 180.5L267.5 177.5z" fill="#35666b" fill-opacity=".85"/><path d="M273 66L278.5 69V177.5L273 180.5z" fill="#2d5a5e" fill-opacity=".28"/></g>
  <!-- bar 2 highlighted -->
  <g><path d="M105.5 66L111 63L116.5 66V117.5L111 120.5L105.5 117.5z" fill="#62abe2"/><path d="M111 63L116.5 66V117.5L111 120.5z" fill="#4a8fae"/><path d="M105.5 66L111 63L116.5 66L111 68.5z" fill="#74baec"/><path d="M105.5 117.5L111 120.5L116.5 117.5V177.5L111 180.5L105.5 177.5z" fill="#41a0e4"/><path d="M111 120.5L116.5 117.5V177.5L111 180.5z" fill="#2e7db8"/></g>
  <!-- x labels -->
  <g font-size="8.500" fill="#a3aaa3" text-anchor="middle">
    <text x="60.700" y="194">示例1</text><text x="114.700" y="194">示例2</text><text x="168.700" y="194">示例3</text><text x="222.700" y="194">示例4</text><text x="276.700" y="194">示例5</text>
  </g>
  <!-- tooltip -->
  <rect x="130" y="135" width="75" height="36" rx="3.500" fill="#1e2023" fill-opacity=".92"/>
  <circle cx="139.700" cy="145" r="3" fill="#1e82d8"/>
  <circle cx="139.700" cy="160" r="3" fill="#3b97d8"/>
  <g font-size="9" font-weight="500" fill="#f4f4f4">
    <text x="146" y="148.300">值1:</text><text x="171" y="148.300" font-family="Liberation Sans, sans-serif" font-weight="700" textLength="13.500" lengthAdjust="spacingAndGlyphs">735</text>
    <text x="146" y="163.300">值2:</text><text x="172" y="163.300" font-family="Liberation Sans, sans-serif" font-weight="700" textLength="13.500" lengthAdjust="spacingAndGlyphs">650</text>
  </g>
</svg>
<!-- selection frame + handles -->
<div class="abs" style="left:780px;top:410px;width:328.500px;height:205px;border:1.300px solid #0b86ff"></div>
<svg style="left:0;top:0" width="1912" height="1001" viewBox="0 0 1912 1001" fill="#fff" stroke="#0b86ff" stroke-width="1.200" pointer-events="none">
  <circle cx="780.600" cy="410.600" r="3.600"/><circle cx="944" cy="410.600" r="3.600"/><circle cx="1107.700" cy="410.600" r="3.600"/>
  <circle cx="780.600" cy="512.400" r="3.600"/><circle cx="1107.700" cy="512.400" r="3.600"/>
  <circle cx="780.600" cy="614.400" r="3.600"/><circle cx="944" cy="614.400" r="3.600"/><circle cx="1107.700" cy="614.400" r="3.600"/>
</svg>


<!-- ============ BOTTOM BAR ============ -->
<div id="bbar" class="abs"></div>
<div class="abs" style="left:310px;top:963px;width:130px;height:38px;background:#26272b"></div>
<div class="abs" style="left:310px;top:963px;width:130px;height:1.400px;background:#0b86ff"></div>
<div class="abs" style="left:309px;top:965px;width:1px;height:36px;background:#26272a"></div>
<div class="abs" style="left:440px;top:965px;width:1px;height:36px;background:#26272a"></div>
<div class="abs" style="left:470px;top:965px;width:1px;height:36px;background:#26272a"></div>
<div class="abs" style="left:529px;top:965px;width:1px;height:36px;background:#26272a"></div>
<div class="t b" style="left:260px;top:976px">前景</div>
<svg style="left:288px;top:969px" width="15" height="15" viewBox="0 0 15 15" fill="none" stroke="#e4e4e4" stroke-width="1"><circle cx="7.500" cy="7.500" r="6.200"/><path d="M7.500 4.600v5.800M4.600 7.500h5.800"/></svg>
<svg style="left:320px;top:979px" width="12" height="12" viewBox="0 0 12 12" fill="none" stroke="#0b86ff" stroke-width="1"><rect x="1" y="1.500" width="10" height="6.500" rx=".6"/><path d="M3.400 8.200l-1.200 2.800M8.600 8.200l1.200 2.800"/></svg>
<div class="t b" style="left:337px;top:977px;color:#0b86ff">子看板1</div>
<svg style="left:448px;top:977px" width="13" height="13" viewBox="0 0 13 13" stroke="#f4f4f4" stroke-width="1.800" fill="none"><path d="M6.500 0.500v12M0.500 6.500h12"/></svg>
<div class="t b" style="left:481px;top:976px">背景</div>
<svg style="left:508px;top:969px" width="15" height="15" viewBox="0 0 15 15" fill="none" stroke="#e4e4e4" stroke-width="1"><circle cx="7.500" cy="7.500" r="6.200"/><path d="M7.500 4.600v5.800M4.600 7.500h5.800"/></svg>

<div class="t" style="left:1501px;top:974px;font-weight:700;color:#e8e8e8"><span class="num" style="transform:scaleX(.84)">69.79%</span></div>
<!-- fit icon -->
<svg style="left:1546px;top:976px" width="15" height="15" viewBox="0 0 15 15" fill="none"><rect x="0.600" y="0.600" width="13.800" height="13.800" fill="#26272b" stroke="#d8d8d8" stroke-width="1.100"/><path d="M7.500 4.500v6M4.500 7.500h6" stroke="#cfd6de" stroke-width="1"/><path d="M7.500 1.600l2 2.700h-4zM7.500 13.400l2-2.700h-4zM1.600 7.500l2.700-2v4zM13.400 7.500l-2.700-2v4z" fill="#8fbdf2"/></svg>
<div class="abs" style="left:1566px;top:968px;width:1px;height:33px;background:#3d3e43"></div>
<!-- keyboard icon -->
<svg style="left:1569px;top:977px" width="18" height="12" viewBox="0 0 18 12" fill="none" stroke="#dcdcdc"><rect x="0.700" y="0.700" width="16.600" height="10.600" rx="1.600" stroke-width="1.200"/><path d="M3.200 4.200h1.400M6 4.200h1.400M8.800 4.200h1.400M11.600 4.200h1.400M13.800 4.200h1.200M3.200 7.800h1.400M6 7.800h6M13.400 7.800h1.400" stroke-width="1.300"/></svg>
<div class="abs" style="left:1590px;top:968px;width:1px;height:33px;background:#3d3e43"></div>
<!-- terminal icon -->
<svg style="left:1594px;top:975px" width="16" height="16" viewBox="0 0 16 16" fill="none"><rect x="0.700" y="0.700" width="14.600" height="14.600" fill="#4a4b50" stroke="#bdbdbd" stroke-width="1.200"/><path d="M3.600 5l3.200 2.800-3.200 2.800M8.200 11h4" stroke="#ececec" stroke-width="1.200"/></svg>

<!-- ============ RIGHT PANEL ============ -->
<div id="rp" class="abs"></div>
<div id="rhead" class="abs"></div>
<div class="abs" style="left:1614px;top:80px;width:298px;height:1px;background:#232427"></div>
<div id="rtabs" class="abs"></div>
<div class="abs" style="left:1614px;top:129px;width:298px;height:1px;background:#28292d"></div>
<div id="rs1" class="abs"></div>
<div class="abs" style="left:1614px;top:170px;width:298px;height:1px;background:#28292d"></div>
<div id="rs2" class="abs"></div>

<div class="t" style="left:1644px;top:52px;font-size:13px;color:#f0f0f0">当前状态：默认状态</div>
<svg style="left:1861px;top:53px" width="14" height="14" viewBox="0 0 14 14" stroke="#f2f2f2" stroke-width="1.5" fill="none"><path d="M7 0.8v12.400M0.8 7h12.400"/></svg>
<svg style="left:1890px;top:55px" width="6" height="10" viewBox="0 0 6 10" stroke="#8d9096" stroke-width="1" fill="none"><path d="M1.500 1l3 4-3 4"/></svg>

<div class="t b" style="left:1632px;top:90px;color:#f2f2f2">样式</div>
<div class="t b" style="left:1672px;top:90px;color:#f2f2f2">交互</div>
<div class="t b" style="left:1712px;top:90px;color:#f2f2f2">数据</div>
<div class="t b" style="left:1752px;top:90px;color:#f2f2f2">代码</div>
<div class="abs" style="left:1624px;top:114px;width:40px;height:2px;background:#0b86ff"></div>

<!-- section 1: 边框设置 (disabled) -->
<svg style="left:1628px;top:145px" width="7" height="10" viewBox="0 0 7 10"><path d="M1 0.800l5.200 4.200L1 9.200z" fill="#80868a"/></svg>
<div class="t b" style="left:1644px;top:142px;color:#7b8284">边框设置</div>
<div class="abs" style="left:1863px;top:146.500px;width:19px;height:7px;border-radius:4px;background:#c2d1d6"></div>
<div class="abs" style="left:1859px;top:144px;width:12px;height:12px;border-radius:6px;background:#fff"></div>
<div class="abs" style="left:1862.500px;top:147.500px;width:5px;height:5px;border-radius:3px;border:1px solid #c4c8cc"></div>
<svg style="left:1893px;top:141px" width="6" height="18" viewBox="0 0 6 18" fill="#70757a"><circle cx="3" cy="3" r="1.700"/><circle cx="3" cy="8.300" r="1.700"/><circle cx="3" cy="13.600" r="1.700"/></svg>

<!-- section 2: 背景设置 -->
<svg style="left:1626px;top:187px" width="10" height="7" viewBox="0 0 10 7"><path d="M0.800 1h8.400L5 6.200z" fill="#dcdcdc"/></svg>
<div class="t" style="left:1644px;top:183px;font-weight:700;color:#f4f4f4">背景设置</div>
<div class="abs" style="left:1860px;top:187.500px;width:20px;height:7px;border-radius:4px;background:#0b86ff"></div>
<div class="abs" style="left:1871px;top:185px;width:12px;height:12px;border-radius:6px;background:#fff"></div>
<div class="abs" style="left:1876.400px;top:188px;width:1.400px;height:6px;background:#4c9af0"></div>
<svg style="left:1893px;top:182px" width="6" height="18" viewBox="0 0 6 18" fill="#dadada"><circle cx="3" cy="3" r="1.700"/><circle cx="3" cy="8.300" r="1.700"/><circle cx="3" cy="13.600" r="1.700"/></svg>

<!-- rows -->
<div class="t b" style="left:1619px;top:220px">背景颜色</div>
<div class="box" style="left:1719px;top:216px;width:40px;height:24px;background:#252628"></div>
<div class="abs" style="left:1725px;top:221px;width:15px;height:15px;background:#faf2e2"></div>
<svg style="left:1743px;top:226px" width="10" height="7" viewBox="0 0 10 7"><path d="M0.600 0.800h8.800L5 6.200z" fill="#c4c7cc"/></svg>

<div class="t b" style="left:1619px;top:254px">背景图/视频</div>
<div class="box" style="left:1719px;top:250px;width:185px;height:24px"></div>
<div class="t" style="left:1730px;top:254px;width:141px;overflow:hidden;font-size:11.500px;color:#ececec">resources/草-2_<span style="letter-spacing:-1px">1690165346912.png</span></div>
<svg style="left:1881px;top:259px" width="10" height="6" viewBox="0 0 10 6" fill="none" stroke="#9a9da3" stroke-width="1.100"><path d="M0.800 0.800l4.200 4L9.200.800"/></svg>

<div class="tex" style="left:1634px;top:284px;width:260px;height:260px"><svg width="260" height="260" style="left:0;top:0"><rect width="260" height="260" filter="url(#grass)"/></svg></div>

<div class="t b" style="left:1619px;top:565px">背景裁剪</div>
<div class="box" style="left:1719px;top:561px;width:185px;height:24px"></div>
<div class="t" style="left:1730px;top:565px;font-size:13px;color:#8b8e94">点击选择文件</div>
<svg style="left:1881px;top:570px" width="10" height="6" viewBox="0 0 10 6" fill="none" stroke="#9a9da3" stroke-width="1.100"><path d="M0.800 0.800l4.200 4L9.200.800"/></svg>

<div class="t b" style="left:1619px;top:604px">填充方式</div>
<div class="abs" style="left:1719px;top:601px;width:185px;height:23px;border:1px solid #4b4c51;border-radius:3px;background:#1d1e20"></div>
<div class="abs" style="left:1719px;top:601px;width:93px;height:23px;background:#0b86ff;border-radius:3px 0 0 3px"></div>
<div class="t b" style="left:1743px;top:604px;font-size:11px;color:#fff">拉伸填充</div>
<div class="t b" style="left:1835px;top:604px;font-size:11px;color:#f0f0f0">平铺填充</div>

<div class="t b" style="left:1619px;top:638px">是否使用点九</div>
<div class="abs" style="left:1720px;top:641.500px;width:20px;height:7px;border-radius:4px;background:#0b86ff"></div>
<div class="abs" style="left:1731px;top:639px;width:12px;height:12px;border-radius:6px;background:#fff"></div>
<div class="abs" style="left:1736.400px;top:642px;width:1.400px;height:6px;background:#4c9af0"></div>

<div class="t b" style="left:1619px;top:672px">点九编辑</div>
<div class="tex" style="left:1651px;top:724px;width:226px;height:226px"><svg width="226" height="226" style="left:0;top:0"><rect width="226" height="226" filter="url(#grass)"/></svg></div>
<div class="abs" style="left:1650px;top:703px;width:1px;height:260px;background:#0b86ff"></div>
<div class="abs" style="left:1877px;top:703px;width:1px;height:260px;background:#0b86ff"></div>
<div class="abs" style="left:1630px;top:723px;width:268px;height:1px;background:#0b86ff"></div>
<div class="abs" style="left:1630px;top:950px;width:268px;height:1px;background:#0b86ff"></div>
<!-- mouse cursor -->
<svg style="left:1625px;top:794px" width="15" height="20" viewBox="0 0 15 20"><path d="M1 1.200V17.200L4.600 12.200L12.800 11z" fill="#1b1c20" stroke="#f2f2f2" stroke-width="1" stroke-linejoin="miter"/></svg>

<!-- status -->
<div id="rstat" class="abs"></div>
<div class="t" style="left:1617px;top:963px;font-weight:700;font-size:12px;color:#f0f0f0">内存：<span class="num" style="transform:scaleX(.86)">168 / 3920 / 4096 MB&nbsp; 19 / 187 MB</span></div>
<div class="t" style="left:1867px;top:963px;font-weight:700;font-size:12px;color:#f0f0f0"><span class="num" style="transform:scaleX(.86)">FPS：</span></div>
<div class="t" style="left:1899px;top:963px;font-weight:700;font-size:12px;color:#f0f0f0"><span class="num" style="transform:scaleX(.86)">60</span></div>
<div class="t" style="left:1617px;top:984px;font-weight:700;font-size:12px;color:#f0f0f0">组件数:<span class="num" style="transform:scaleX(.86)">1 / 1</span></div>
<div class="t" style="left:1890px;top:984px;font-weight:700;font-size:12px;color:#f0f0f0"><span class="num" style="transform:scaleX(.8)">4.1.8</span></div>

</body>
</html>
